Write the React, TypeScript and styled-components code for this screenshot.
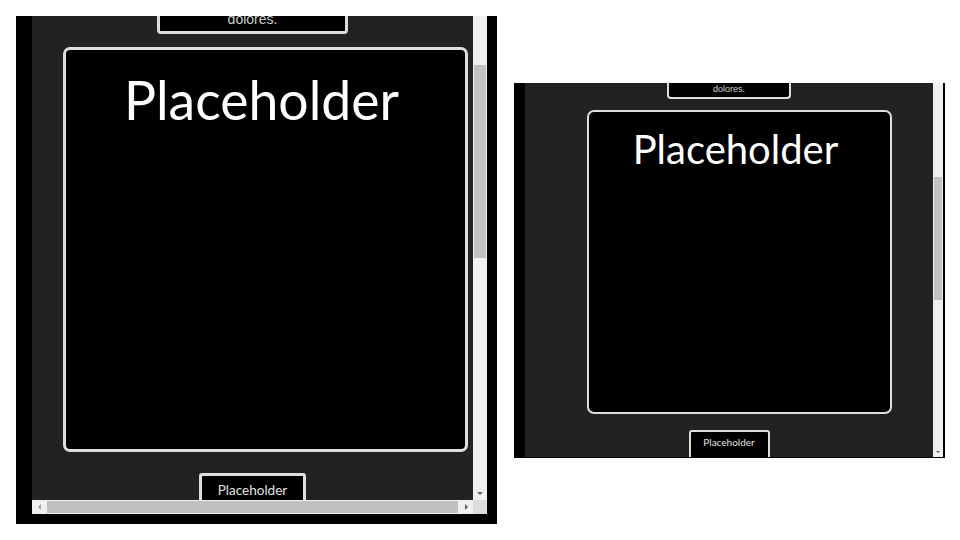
import React from "react";
import styled, { createGlobalStyle } from "styled-components";

const GlobalStyle = createGlobalStyle`
  html, body {
    margin: 0;
    padding: 0;
    background: #ffffff;
  }
`;

const light = "#dedede";
const panel = "#222222";
const track = "#f0f0f0";
const thumb = "#c1c1c1";

type Spec = {
  strip: number;
  content: number;
  bar: number;
  edge: number;
  height: number;
  hbar: number;
  bottom: number;
  topBox: { width: number; height: number; font: number; pad: number; border: number };
  card: { width: number; height: number; left: number; top: number; border: number; font: number; pad: number };
  button: { width: number; top: number; border: number; font: number; pad: number };
  thumbTop: number;
  thumbHeight: number;
};

const big: Spec = {
  strip: 16,
  content: 441,
  bar: 14,
  edge: 10,
  height: 484,
  hbar: 14,
  bottom: 10,
  topBox: { width: 191, height: 18, font: 14, pad: 4, border: 3 },
  card: { width: 405, height: 405, left: 31, top: 13, border: 3, font: 53.5, pad: 23 },
  button: { width: 107, top: 21, border: 3, font: 13.5, pad: 8 },
  thumbTop: 49,
  thumbHeight: 193,
};

const small: Spec = {
  strip: 11,
  content: 408,
  bar: 10,
  edge: 2,
  height: 374,
  hbar: 0,
  bottom: 1,
  topBox: { width: 124, height: 16, font: 9, pad: 2, border: 2 },
  card: { width: 305, height: 304, left: 62, top: 11, border: 2, font: 40, pad: 17 },
  button: { width: 81, top: 16, border: 2, font: 10, pad: 5 },
  thumbTop: 94,
  thumbHeight: 123,
};

const Page = styled.div`
  height: 540px;
  display: flex;
  flex-direction: row;
  align-items: center;
  gap: 17px;
  padding: 0 16px;
  box-sizing: border-box;
`;

const Frame = styled.div<{ $s: Spec }>`
  display: grid;
  grid-template-columns: ${(p) => `${p.$s.strip}px ${p.$s.content}px ${p.$s.bar}px ${p.$s.edge}px`};
  grid-template-rows: ${(p) => `${p.$s.height}px ${p.$s.hbar}px ${p.$s.bottom}px`};
  background: #000;
`;

const Viewport = styled.div`
  grid-column: 2;
  grid-row: 1;
  background: ${panel};
  overflow: hidden;
  display: flex;
  flex-direction: column;
  align-items: center;
`;

const TopBox = styled.div<{ $s: Spec }>`
  width: ${(p) => p.$s.topBox.width}px;
  height: ${(p) => p.$s.topBox.height}px;
  flex-shrink: 0;
  box-sizing: border-box;
  background: #000;
  border: ${(p) => p.$s.topBox.border}px solid ${light};
  border-top: none;
  border-radius: 0 0 4px 4px;
  display: flex;
  align-items: flex-end;
  justify-content: center;
  padding-bottom: ${(p) => p.$s.topBox.pad}px;
  color: #cfcfcf;
  font-family: "Liberation Sans", Arial, sans-serif;
  font-size: ${(p) => p.$s.topBox.font}px;
  line-height: 1.15;
`;

const Card = styled.div<{ $s: Spec }>`
  align-self: flex-start;
  flex-shrink: 0;
  box-sizing: border-box;
  width: ${(p) => p.$s.card.width}px;
  height: ${(p) => p.$s.card.height}px;
  margin-left: ${(p) => p.$s.card.left}px;
  margin-top: ${(p) => p.$s.card.top}px;
  border: ${(p) => p.$s.card.border}px solid ${light};
  border-radius: 7px;
  background: #000;
  padding-top: ${(p) => p.$s.card.pad}px;
  padding-right: 8px;
  text-align: center;
  color: #ffffff;
  font-family: Lato, "Open Sans", sans-serif;
  font-size: ${(p) => p.$s.card.font}px;
  line-height: 1;
`;

const Button = styled.div<{ $s: Spec }>`
  flex-shrink: 0;
  box-sizing: border-box;
  width: ${(p) => p.$s.button.width}px;
  height: 60px;
  margin-top: ${(p) => p.$s.button.top}px;
  border: ${(p) => p.$s.button.border}px solid ${light};
  border-radius: 3px 3px 0 0;
  background: #000;
  padding-top: ${(p) => p.$s.button.pad}px;
  text-align: center;
  color: #e2e2e2;
  font-family: Lato, "Open Sans", sans-serif;
  font-size: ${(p) => p.$s.button.font}px;
  line-height: 1;
`;

const VBar = styled.div<{ $s: Spec }>`
  grid-column: 3;
  grid-row: 1;
  background: ${track};
  display: flex;
  flex-direction: column;
  padding-top: ${(p) => p.$s.thumbTop}px;
`;

const VThumb = styled.div<{ $s: Spec }>`
  height: ${(p) => p.$s.thumbHeight}px;
  margin: 0 1px;
  background: ${thumb};
`;

const Spacer = styled.div`
  flex: 1;
`;

const ArrowBox = styled.div<{ $size: number }>`
  width: 100%;
  height: ${(p) => p.$size}px;
  display: flex;
  align-items: center;
  justify-content: center;
  flex-shrink: 0;
`;

const Arrow = styled.div<{ $dir: "down" | "left" | "right"; $size: number; $color: string }>`
  width: 0;
  height: 0;
  ${(p) =>
    p.$dir === "down"
      ? `border-left: ${p.$size}px solid transparent;
         border-right: ${p.$size}px solid transparent;
         border-top: ${p.$size}px solid ${p.$color};`
      : p.$dir === "left"
      ? `border-top: ${p.$size}px solid transparent;
         border-bottom: ${p.$size}px solid transparent;
         border-right: ${p.$size}px solid ${p.$color};`
      : `border-top: ${p.$size}px solid transparent;
         border-bottom: ${p.$size}px solid transparent;
         border-left: ${p.$size}px solid ${p.$color};`}
`;

const HBar = styled.div`
  grid-column: 2;
  grid-row: 2;
  background: ${track};
  display: flex;
  flex-direction: row;
  align-items: stretch;
`;

const HArrow = styled.div`
  width: 14px;
  display: flex;
  align-items: center;
  justify-content: center;
  flex-shrink: 0;
`;

const HThumb = styled.div`
  flex: 1;
  margin: 1px 1px;
  background: ${thumb};
`;

const Corner = styled.div`
  grid-column: 3;
  grid-row: 2;
  background: #dcdcdc;
`;

const Window = ({ s }: { s: Spec }) => (
  <Frame $s={s}>
    <Viewport>
      <TopBox $s={s}>dolores.</TopBox>
      <Card $s={s}>Placeholder</Card>
      <Button $s={s}>Placeholder</Button>
    </Viewport>
    <VBar $s={s}>
      <VThumb $s={s} />
      <Spacer />
      <ArrowBox $size={s.bar}>
        <Arrow $dir="down" $size={s.bar > 12 ? 3 : 2} $color="#606060" />
      </ArrowBox>
    </VBar>
    {s.hbar > 0 && (
      <>
        <HBar>
          <HArrow>
            <Arrow $dir="left" $size={3} $color="#a3a3a3" />
          </HArrow>
          <HThumb />
          <HArrow>
            <Arrow $dir="right" $size={3} $color="#606060" />
          </HArrow>
        </HBar>
        <Corner />
      </>
    )}
  </Frame>
);

const App = (): JSX.Element => {
  return (
    <>
      <GlobalStyle />
      <Page>
        <Window s={big} />
        <Window s={small} />
      </Page>
    </>
  );
};

export default App;
